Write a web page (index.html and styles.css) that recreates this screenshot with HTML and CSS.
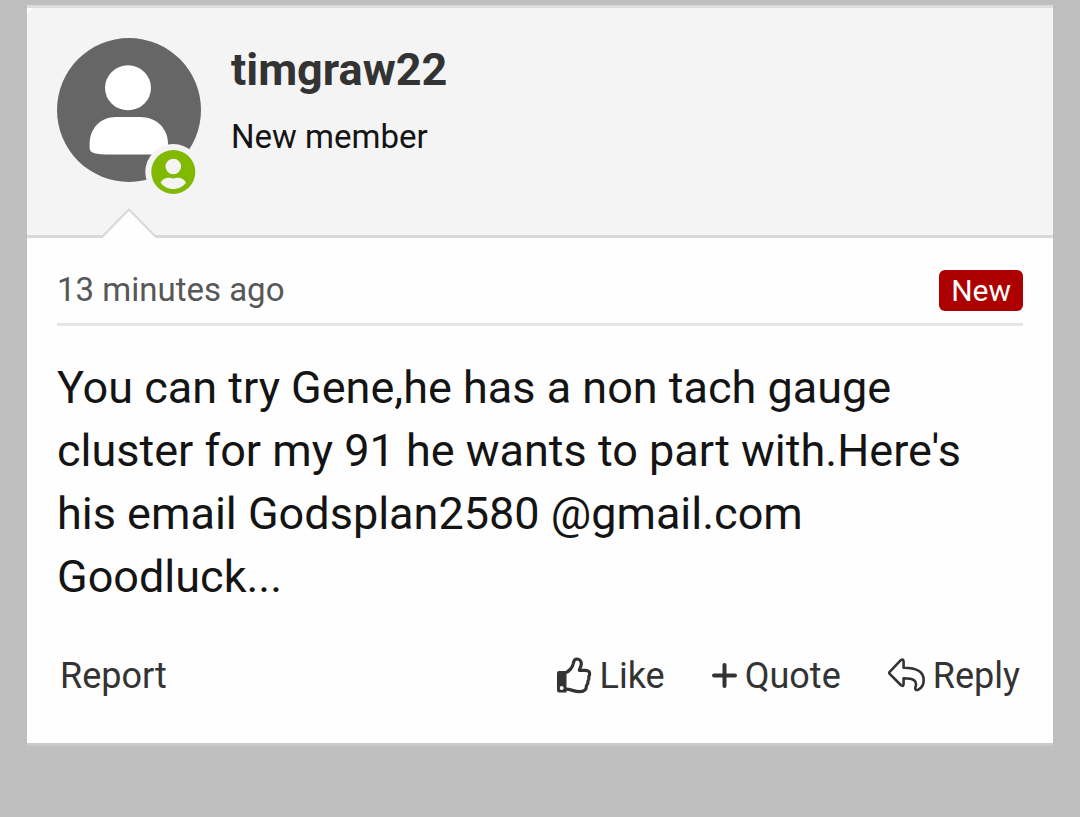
FILE: index.html
```html
<!DOCTYPE html>
<html lang="en">
<head>
<meta charset="utf-8">
<title>Forum post</title>
<link rel="stylesheet" href="styles.css">
</head>
<body>
<article class="post">
  <header class="post-header">
    <div class="avatar">
      <svg class="avatar-image" viewBox="0 0 144 144" aria-hidden="true">
        <circle cx="72" cy="72" r="72" fill="#666"/>
        <ellipse cx="71" cy="49.800" rx="23" ry="22.500" fill="#fff"/>
        <path d="M59 79H83C99 79 111 90 111 106V110C111 114 106 116.500 96 116.500H54C38 116.500 32.600 115 32.600 110V106C32.600 90 44 79 59 79Z" fill="#fff"/>
      </svg>
      <svg class="avatar-status" viewBox="0 0 56 56" aria-hidden="true">
        <circle cx="28.300" cy="28" r="28" fill="#f4f4f4"/>
        <circle cx="28.300" cy="28" r="22" fill="#80b900"/>
        <circle cx="28.300" cy="22.500" r="7.800" fill="#f4f4f4"/>
        <path d="M15.600 38.500C17.300 35.500 20.300 33.700 23.300 33.700C25.300 33.700 26.300 34.400 28.300 34.400S31.300 33.700 33.300 33.700C36.300 33.700 39.300 35.500 41 38.500C38.300 42.500 33.800 45 28.300 45S18.300 42.500 15.600 38.500Z" fill="#f4f4f4"/>
      </svg>
    </div>
    <div class="author">
      <h2 class="author-name">timgraw22</h2>
      <p class="author-title">New member</p>
    </div>
    <svg class="pointer" viewBox="0 0 56 30" aria-hidden="true">
      <path d="M0.500 30L28 1L55.500 30Z" fill="#fefefe"/>
      <path d="M0.500 29.500L28 1.500L55.500 29.500" fill="none" stroke="#d8d8d8" stroke-width="2"/>
    </svg>
  </header>
  <div class="post-main">
    <div class="post-meta">
      <time class="post-time">13 minutes ago</time>
      <span class="post-new">New</span>
    </div>
    <p class="post-text">You can try Gene,he has a non tach gauge cluster for my 91 he wants to part with.Here's his email Godsplan2580 @gmail.com Goodluck...</p>
    <footer class="post-actions">
      <button class="action report" type="button">Report</button>
      <button class="action" type="button">
        <svg class="icon icon-like" viewBox="0 0 35 37" aria-hidden="true">
          <path d="M2 14H9.500V35.500H2Q0 35.500 0 33.500V16Q0 14 2 14ZM4.700 29A2 2 0 1 0 4.700 33A2 2 0 1 0 4.700 29Z" fill="#333" fill-rule="evenodd"/>
          <path d="M9 15.500C12 14.500 15.500 10.500 16.300 6.500C16.700 3.500 17.800 2 19.800 2C22.800 2 24.300 4.300 24.300 7C24.300 9.500 22.500 11.500 22.300 13.300H28.500C31.300 13.300 32.900 15 32.600 17.200C32.500 18.500 31.800 19 31.800 20C32.200 21.500 31.800 23 31 24C31.200 25.800 30.600 27.300 29.500 28.500C29.500 33 27 34.700 22.800 34.700C17 34.700 14 32.200 9 32.200" fill="none" stroke="#333" stroke-width="3.200" stroke-linejoin="round"/>
        </svg>
        <span>Like</span>
      </button>
      <button class="action" type="button">
        <svg class="icon icon-quote" viewBox="0 0 25 25" aria-hidden="true">
          <path d="M12.500 2V23M2 12.500H23" fill="none" stroke="#333" stroke-width="4" stroke-linecap="round"/>
        </svg>
        <span>Quote</span>
      </button>
      <button class="action" type="button">
        <svg class="icon icon-reply" viewBox="0 0 37 34" aria-hidden="true">
          <path d="M1.700 13.800L12.800 2.200Q15.600 .200 15.600 3.700V9.700C28 9.700 35.700 13 35.700 22C35.700 26.500 33.500 30 30.300 31.700C27.800 32.700 26.800 31.300 27.500 29C29.500 23 26 20.200 15.600 20.200V25.600Q15.600 29.200 12.800 27L1.700 15.800Q.800 14.800 1.700 13.800Z" fill="none" stroke="#333" stroke-width="2.600" stroke-linejoin="round"/>
        </svg>
        <span>Reply</span>
      </button>
    </footer>
  </div>
</article>
</body>
</html>
```
FILE: styles.css
```css
* {
  box-sizing: border-box;
}

body {
  margin: 0;
  padding: 5px 27px 24px;
  background: #bfbfbf;
  color: #141414;
  font-family: Roboto, "Liberation Sans", sans-serif;
}

.post {
  background: #fefefe;
  border-top: 3px solid #dcdcdc;
  border-bottom: 3px solid #cacaca;
}

.post-header {
  position: relative;
  display: flex;
  gap: 30px;
  padding: 30px 30px 53px;
  background: #f4f4f4;
  border-bottom: 3px solid #d8d8d8;
  border-radius: 9px 0 0 0;
}

.avatar {
  position: relative;
  flex: none;
  width: 144px;
  height: 144px;
}

.avatar-image {
  display: block;
  width: 100%;
  height: 100%;
}

.avatar-status {
  position: absolute;
  right: 0;
  bottom: -18px;
  width: 56px;
  height: 56px;
}

.pointer {
  position: absolute;
  left: 74px;
  bottom: -3px;
  width: 56px;
  height: 30px;
}

.author-name,
.author-title,
.post-text {
  margin: 0;
}

.author-name {
  color: #333;
  font-size: 45px;
  font-weight: 700;
  line-height: 63px;
}

.author-title {
  margin-top: 13px;
  font-size: 33px;
  line-height: 46px;
}

.post-main {
  padding: 29px 30px 42px;
}

.post-meta {
  display: flex;
  align-items: center;
  justify-content: space-between;
  padding-bottom: 10px;
  border-bottom: 3px solid #e6e6e6;
}

.post-time {
  color: #575757;
  font-size: 33px;
  line-height: 46px;
}

.post-new {
  padding: 0 12px;
  border-radius: 6px;
  background: #ad0000;
  color: #fefefe;
  font-size: 30px;
  line-height: 41px;
}

.post-text {
  margin-top: 30px;
  font-size: 45px;
  line-height: 63px;
}

.post-actions {
  display: flex;
  align-items: center;
  gap: 41px;
  margin-top: 43px;
}

.action {
  display: flex;
  align-items: center;
  gap: 8px;
  padding: 0 3px;
  border: 0;
  background: none;
  color: #333;
  font: inherit;
  font-size: 36px;
  line-height: 50px;
  cursor: pointer;
}

.report {
  margin-right: auto;
}

.icon {
  margin-bottom: 2px;
}

.icon-like {
  width: 35px;
  height: 37px;
}

.icon-quote {
  width: 25px;
  height: 25px;
}

.icon-reply {
  width: 37px;
  height: 34px;
}
```
